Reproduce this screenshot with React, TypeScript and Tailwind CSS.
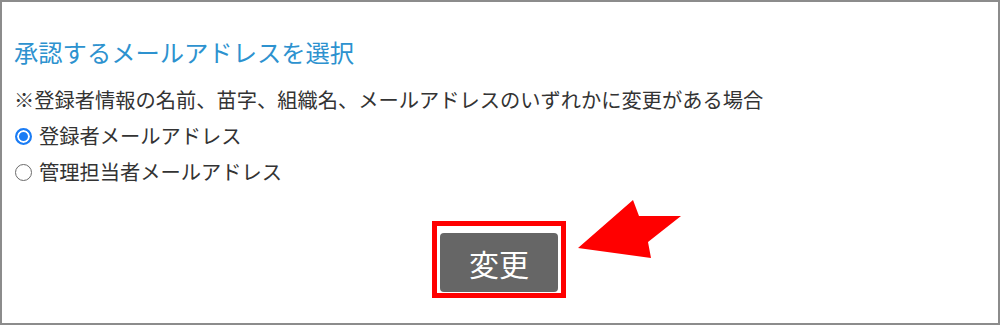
import { useState } from "react";

const FONT = { fontFamily: '"Noto Sans CJK JP", "Noto Sans", sans-serif' };

export default function App() {
  const [target, setTarget] = useState<"registrant" | "manager">("registrant");

  const radioCls =
    "m-0 shrink-0 appearance-none w-[17px] h-[17px] rounded-full bg-white border-[1.5px] border-[#6b6b6b] checked:border-2 checked:border-[#1a7cf5] checked:bg-[#1a7cf5] checked:shadow-[inset_0_0_0_2px_#ffffff]";

  return (
    <div
      className="relative w-[1000px] h-[325px] bg-white border-2 border-[#8c8c8c] text-[#333333] overflow-hidden"
      style={FONT}
    >
      <div className="pl-[12px] pt-[32px]">
        {/* Heading */}
        <h2 className="text-[24.3px] leading-[36px] text-[#2d92cf] font-normal">
          承認するメールアドレスを選択
        </h2>

        {/* Options */}
        <div className="mt-[12px] text-[20.25px] leading-[36px]">
          <p>※登録者情報の名前、苗字、組織名、メールアドレスのいずれかに変更がある場合</p>
          <label className="flex items-center gap-[7px] pl-[1px]">
            <input
              type="radio"
              name="mail"
              checked={target === "registrant"}
              onChange={() => setTarget("registrant")}
              className={radioCls}
            />
            <span>登録者メールアドレス</span>
          </label>
          <label className="flex items-center gap-[7px] pl-[1px]">
            <input
              type="radio"
              name="mail"
              checked={target === "manager"}
              onChange={() => setTarget("manager")}
              className={radioCls}
            />
            <span>管理担当者メールアドレス</span>
          </label>
        </div>
      </div>

      {/* Submit with red highlight frame */}
      <div className="flex justify-center mt-[31px] pr-[2px]">
        <div className="border-[5px] border-[#ff0000] pt-[7px] pb-[1px] pl-[3px] pr-[3px]">
          <button className="w-[118px] h-[59px] rounded-[4px] bg-[#666666] text-white text-[30px] leading-none">
            変更
          </button>
        </div>
      </div>

      {/* Arrow annotation */}
      <svg
        className="absolute left-0 top-0 pointer-events-none"
        width="1000"
        height="326"
        viewBox="0 0 1000 326"
      >
        <polygon
          points="576,246 631,198 637,214 679,214 646,240 649,256"
          fill="#ff0000"
        />
      </svg>
    </div>
  );
}
